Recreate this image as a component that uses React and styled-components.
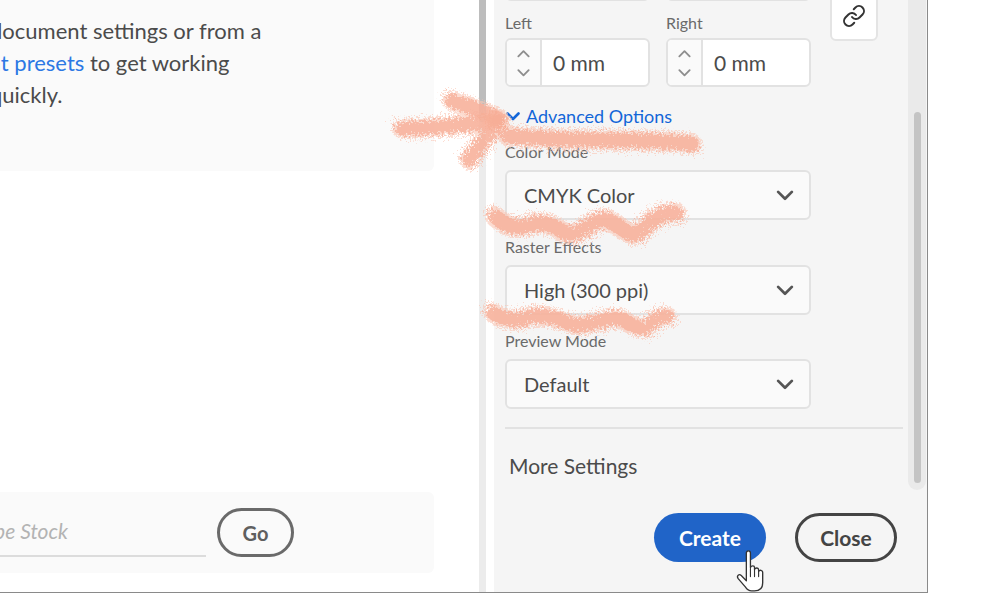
import styled, { createGlobalStyle } from 'styled-components';
import { Link } from 'lucide-react';

const GlobalStyle = createGlobalStyle`
  html, body {
    margin: 0;
    padding: 0;
    background: #fff;
    font-family: Lato, "Open Sans", sans-serif;
  }
`;

const selects = [
  { label: 'Color Mode', value: 'CMYK Color' },
  { label: 'Raster Effects', value: 'High (300 ppi)' },
  { label: 'Preview Mode', value: 'Default' },
];

const strokes = [
  { w: 14, d: 'M402 129C430 128 465 125 497 120' },
  { w: 14, d: 'M452 101C470 106 485 112 500 119' },
  { w: 14, d: 'M498 122C488 135 478 148 469 160' },
  { w: 15, d: 'M508 136C570 143 640 137 692 144' },
  { w: 15, d: 'M496 217C505 226 515 229 527 226C540 220 552 224 565 233C578 238 590 222 604 219C615 220 625 236 636 234C648 228 652 213 676 213' },
  { w: 14, d: 'M493 313C505 322 518 321 530 317C545 313 560 320 574 325C590 327 605 317 618 318C630 322 636 330 645 328C652 322 660 316 667 316' },
];

function Chevron({ up, size = 16, color = '#6e6e6e', weight = 2 }) {
  return (
    <svg width={size} height={size} viewBox="0 0 16 16" fill="none">
      <path
        d={up ? 'M2.5 11 8 5.5 13.5 11' : 'M2.5 5.5 8 11l5.5-5.5'}
        stroke={color}
        strokeWidth={weight}
        strokeLinecap="round"
        strokeLinejoin="round"
      />
    </svg>
  );
}

function Stepper({ label }) {
  return (
    <Field>
      <Label>{label}</Label>
      <StepInput>
        <StepButtons>
          <Chevron up size={15} color="#8e8e8e" />
          <Chevron size={15} color="#8e8e8e" />
        </StepButtons>
        <StepValue>0 mm</StepValue>
      </StepInput>
    </Field>
  );
}

function Scribbles() {
  return (
    <ScribbleLayer viewBox="0 0 1000 615">
      <defs>
        <filter id="fuzz" x="-10%" y="-40%" width="120%" height="180%">
          <feTurbulence type="fractalNoise" baseFrequency="0.45" numOctaves="2" seed="4" />
          <feDisplacementMap in="SourceGraphic" scale="16" />
        </filter>
        <filter id="fuzzWide" x="-10%" y="-40%" width="120%" height="180%">
          <feTurbulence type="fractalNoise" baseFrequency="0.6" numOctaves="2" seed="11" />
          <feDisplacementMap in="SourceGraphic" scale="20" />
        </filter>
      </defs>
      <g fill="none" stroke="#fac4b2" strokeOpacity="0.6" strokeLinecap="round" strokeLinejoin="round" filter="url(#fuzzWide)">
        {strokes.map((s) => (
          <path key={s.d} strokeWidth={s.w + 6} d={s.d} />
        ))}
      </g>
      <g fill="none" stroke="#f7ae97" strokeOpacity="0.75" strokeLinecap="round" strokeLinejoin="round" filter="url(#fuzz)">
        {strokes.map((s) => (
          <path key={s.d} strokeWidth={s.w} d={s.d} />
        ))}
      </g>
    </ScribbleLayer>
  );
}

function Hand() {
  return (
    <HandCursor width="39" height="47" viewBox="0 0 34 46">
      <path
        d="M10 5c0-3 4-3 4 0v14c1-2 4-2 4 0v2c1-2 4-2 4 .5v1.500c1-2 4-1.500 4 1v10c0 5-3 8-8 8h-3c-3 0-4-1-6-4l-7-8c-2-3 1-5 3-3l5 5z"
        fill="#fff"
        stroke="#333"
        strokeWidth="1.300"
        strokeLinejoin="round"
      />
      <path d="M14 20v8M18 21v7M22 23v5" stroke="#333" strokeWidth="1.100" strokeLinecap="round" />
    </HandCursor>
  );
}

export default function App() {
  return (
    <>
      <GlobalStyle />
      <Page>
        <Window>
          <LeftPane>
            <InfoCard>
              <InfoLine>document settings or from a</InfoLine>
              <InfoLine>
                <Anchor>at presets</Anchor> to get working
              </InfoLine>
              <InfoLine>quickly.</InfoLine>
            </InfoCard>
            <SearchCard>
              <SearchField>Adobe Stock</SearchField>
              <GoButton>Go</GoButton>
            </SearchCard>
          </LeftPane>
          <LeftScroll>
            <LeftThumb />
          </LeftScroll>
          <Panel>
            <ScrollArea>
              <Form>
                <MarginGrid>
                  <MarginFields>
                    <Row>
                      <Stepper label="Top" />
                      <Stepper label="Bottom" />
                    </Row>
                    <Row>
                      <Stepper label="Left" />
                      <Stepper label="Right" />
                    </Row>
                  </MarginFields>
                  <LinkButton>
                    <Link size={24} strokeWidth={2} color="#333" />
                  </LinkButton>
                </MarginGrid>
                <Advanced>
                  <Chevron size={16} color="#1266d8" weight={2.600} />
                  <span>Advanced Options</span>
                </Advanced>
                {selects.map((s) => (
                  <SelectField key={s.label}>
                    <Label $gap={8}>{s.label}</Label>
                    <Select>
                      <span>{s.value}</span>
                      <Chevron size={20} color="#555" weight={2.200} />
                    </Select>
                  </SelectField>
                ))}
                <Divider />
                <MoreSettings>More Settings</MoreSettings>
              </Form>
              <PanelScroll>
                <PanelThumb />
              </PanelScroll>
            </ScrollArea>
            <Footer>
              <CreateButton>
                Create
                <Hand />
              </CreateButton>
              <CloseButton>Close</CloseButton>
            </Footer>
          </Panel>
          <Scribbles />
        </Window>
      </Page>
    </>
  );
}

const Page = styled.div`
  width: 1000px;
  height: 615px;
  background: #fff;
  overflow: hidden;
`;

const Window = styled.div`
  position: relative;
  display: flex;
  width: 928px;
  height: 593px;
  box-sizing: border-box;
  border-right: 1px solid #8a8a8a;
  border-bottom: 1px solid #8a8a8a;
  overflow: hidden;
`;

const LeftPane = styled.div`
  width: 479px;
  flex: none;
  display: flex;
  flex-direction: column;
  padding-bottom: 19px;
  box-sizing: border-box;
  overflow: hidden;
`;

const InfoCard = styled.div`
  width: 434px;
  height: 171px;
  box-sizing: border-box;
  padding: 15px 0 0 0;
  background: #fafafa;
  border-radius: 0 0 6px 0;
`;

const InfoLine = styled.div`
  margin-left: -10px;
  font-size: 22px;
  line-height: 32px;
  color: #4b4b4b;
  white-space: nowrap;
`;

const Anchor = styled.span`
  color: #2c78e4;
`;

const SearchCard = styled.div`
  width: 434px;
  height: 81px;
  margin-top: auto;
  display: flex;
  align-items: center;
  gap: 11px;
  background: #fafafa;
  border-radius: 0 6px 6px 0;
`;

const SearchField = styled.div`
  width: 206px;
  height: 48px;
  box-sizing: border-box;
  padding-top: 9px;
  margin-top: 1px;
  border-bottom: 2px solid #dcdcdc;
  font-size: 21px;
  font-style: italic;
  color: #b3b3b3;
  text-align: right;
  padding-right: 138px;
  white-space: nowrap;
  direction: rtl;
`;

const GoButton = styled.div`
  width: 77px;
  height: 49px;
  box-sizing: border-box;
  display: flex;
  align-items: center;
  justify-content: center;
  border: 3px solid #6a6a6a;
  border-radius: 25px;
  font-size: 20px;
  font-weight: 700;
  color: #5f5f5f;
`;

const LeftScroll = styled.div`
  width: 7px;
  flex: none;
  background: #ececec;
`;

const LeftThumb = styled.div`
  height: 122px;
  background: #bdbdbd;
  border-radius: 0 0 3px 3px;
`;

const Panel = styled.div`
  margin-left: 8px;
  flex: 1;
  min-width: 0;
  display: flex;
  flex-direction: column;
  background: #f5f5f5;
`;

const ScrollArea = styled.div`
  flex: 1;
  min-height: 0;
  display: flex;
  overflow: hidden;
`;

const Form = styled.div`
  width: 409px;
  flex: none;
  box-sizing: border-box;
  padding-left: 11px;
`;

const MarginGrid = styled.div`
  display: flex;
  align-items: flex-end;
  gap: 19px;
  margin-top: -73px;
`;

const MarginFields = styled.div`
  width: 306px;
  flex: none;
  display: flex;
  flex-direction: column;
  gap: 12px;
`;

const Row = styled.div`
  display: flex;
  gap: 16px;
`;

const Field = styled.div`
  width: 145px;
`;

const Label = styled.div`
  height: 20px;
  margin-bottom: ${(p) => p.$gap ?? 5}px;
  font-size: 16px;
  line-height: 20px;
  color: #6a6a6a;
  white-space: nowrap;
`;

const StepInput = styled.div`
  height: 49px;
  box-sizing: border-box;
  display: flex;
  border: 2px solid #e2e2e2;
  border-radius: 6px;
  overflow: hidden;
  background: #fff;
`;

const StepButtons = styled.div`
  width: 35px;
  flex: none;
  box-sizing: border-box;
  display: flex;
  flex-direction: column;
  align-items: center;
  justify-content: center;
  gap: 4px;
  background: #fafafa;
  border-right: 2px solid #e2e2e2;
`;

const StepValue = styled.div`
  flex: 1;
  padding-left: 11px;
  display: flex;
  align-items: center;
  font-size: 21px;
  color: #4b4b4b;
`;

const LinkButton = styled.div`
  width: 48px;
  height: 90px;
  flex: none;
  box-sizing: border-box;
  margin-bottom: 46px;
  padding-bottom: 11px;
  display: flex;
  align-items: flex-end;
  justify-content: center;
  background: #fff;
  border: 2px solid #e4e4e4;
  border-radius: 6px;
`;

const Advanced = styled.div`
  margin: 19px 0 0.5px;
  height: 20px;
  display: flex;
  align-items: center;
  gap: 5px;
  font-size: 18px;
  color: #1266d8;
  white-space: nowrap;
`;

const SelectField = styled.div`
  margin-top: 16.4px;
  width: 306px;
`;

const Select = styled.div`
  height: 50px;
  box-sizing: border-box;
  display: flex;
  align-items: center;
  justify-content: space-between;
  padding: 0 14px 0 17px;
  border: 2px solid #e2e2e2;
  border-radius: 6px;
  background: #fafafa;
  font-size: 20px;
  color: #4b4b4b;
`;

const Divider = styled.div`
  margin-top: 18px;
  width: 398px;
  height: 2px;
  background: #e2e2e2;
`;

const MoreSettings = styled.div`
  margin: 23px 0 0 4px;
  font-size: 21px;
  line-height: 28px;
  color: #4b4b4b;
`;

const PanelScroll = styled.div`
  width: 18px;
  height: 490px;
  margin-left: 5px;
  box-sizing: border-box;
  padding: 112px 5px 7px 6px;
  background: #eaeaea;
  border-radius: 0 0 9px 9px;
`;

const PanelThumb = styled.div`
  height: 100%;
  background: #c4c4c4;
  border-radius: 4px;
`;

const Footer = styled.div`
  height: 102px;
  flex: none;
  box-sizing: border-box;
  padding: 23px 30px 0 0;
  display: flex;
  justify-content: flex-end;
  gap: 29px;
`;

const CreateButton = styled.div`
  position: relative;
  width: 112px;
  height: 49px;
  display: flex;
  align-items: center;
  justify-content: center;
  border-radius: 25px;
  background: #2064c8;
  color: #fff;
  font-size: 21px;
  font-weight: 700;
`;

const CloseButton = styled.div`
  width: 102px;
  height: 49px;
  box-sizing: border-box;
  display: flex;
  align-items: center;
  justify-content: center;
  border: 3px solid #444;
  border-radius: 25px;
  font-size: 21px;
  font-weight: 700;
  color: #444;
`;

const HandCursor = styled.svg`
  position: absolute;
  left: 80px;
  top: 35px;
`;

const ScribbleLayer = styled.svg`
  position: absolute;
  left: 0;
  top: 0;
  width: 1000px;
  height: 615px;
  pointer-events: none;
`;
